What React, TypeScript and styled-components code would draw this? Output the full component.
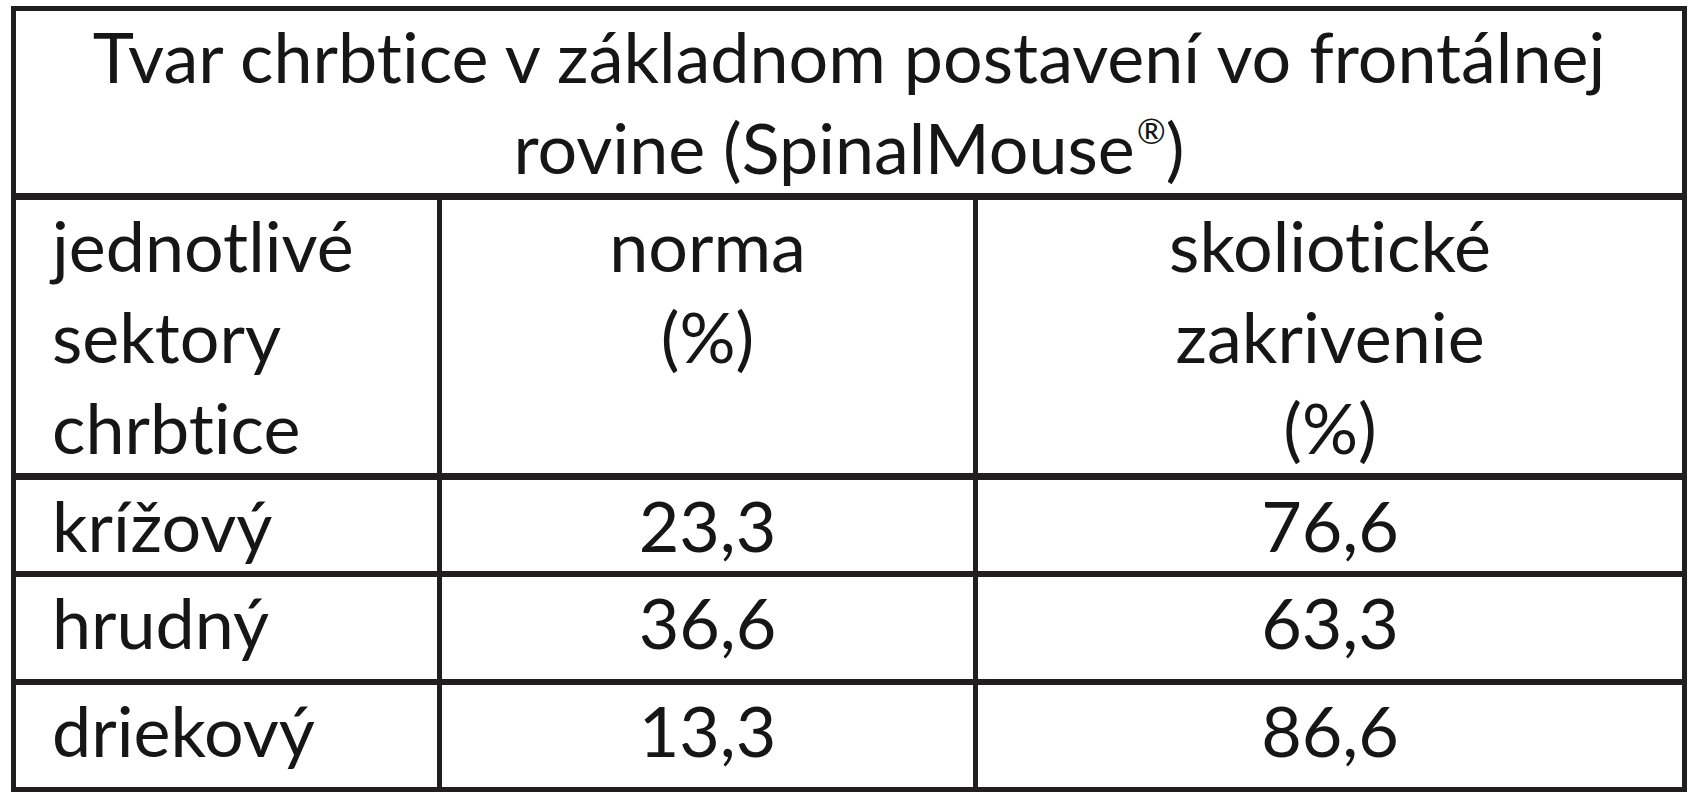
import React from 'react';
import styled, { createGlobalStyle } from 'styled-components';

const GlobalStyle = createGlobalStyle`
  html, body {
    margin: 0;
    padding: 0;
    background: #ffffff;
  }
  body {
    font-family: Lato, 'Open Sans', 'DejaVu Sans', sans-serif;
    color: #161616;
    font-variant-ligatures: none;
    font-feature-settings: 'liga' 0, 'clig' 0;
  }
`;

const ink = '#221e1f';

const Table = styled.table`
  margin: 6px 0 0 11px;
  width: 1676px;
  border: 5px solid ${ink};
  border-spacing: 0;
  table-layout: fixed;
  font-size: 70px;
  line-height: 91px;
`;

const Col = styled.col<{ $w: number }>`
  width: ${(p) => p.$w}px;
`;

const Row = styled.tr<{ $h?: number; $line?: number }>`
  height: ${(p) => (p.$h ? `${p.$h}px` : 'auto')};

  & > td {
    border-top: ${(p) => p.$line ?? 0}px solid ${ink};
  }
`;

const Cell = styled.td<{ $align?: 'left' | 'center'; $first?: boolean }>`
  padding: 0;
  padding-left: ${(p) => (p.$align === 'left' ? '36px' : '0')};
  text-align: ${(p) => p.$align ?? 'center'};
  vertical-align: top;
  border-left: ${(p) => (p.$first ? 0 : 5)}px solid ${ink};
  white-space: nowrap;
`;

const Title = styled.td`
  padding: 0;
  text-align: center;
  vertical-align: top;
`;

const Sup = styled.sup`
  font-size: 0.5em;
  line-height: 0;
  vertical-align: 0.85em;
  margin-left: 2px;
`;

const rows = [
  { name: 'krížový', norma: '23,3', skol: '76,6', h: 96, line: 7 },
  { name: 'hrudný', norma: '36,6', skol: '63,3', h: 108, line: 6 },
  { name: 'driekový', norma: '13,3', skol: '86,6', h: 108, line: 6 },
];

export default function App() {
  return (
    <>
      <GlobalStyle />
      <Table>
        <colgroup>
          <Col $w={421} />
          <Col $w={536} />
          <Col $w={709} />
        </colgroup>
        <tbody>
          <Row $h={182}>
            <Title colSpan={3}>
              Tvar chrbtice v základnom postavení vo frontálnej
              <br />
              rovine (SpinalMouse<Sup>®</Sup>)
            </Title>
          </Row>
          <Row $h={277} $line={7}>
            <Cell $align="left" $first>
              jednotlivé
              <br />
              sektory
              <br />
              chrbtice
            </Cell>
            <Cell>
              norma
              <br />
              (%)
            </Cell>
            <Cell>
              skoliotické
              <br />
              zakrivenie
              <br />
              (%)
            </Cell>
          </Row>
          {rows.map((r) => (
            <Row key={r.name} $h={r.h} $line={r.line}>
              <Cell $align="left" $first>{r.name}</Cell>
              <Cell>{r.norma}</Cell>
              <Cell>{r.skol}</Cell>
            </Row>
          ))}
        </tbody>
      </Table>
    </>
  );
}
